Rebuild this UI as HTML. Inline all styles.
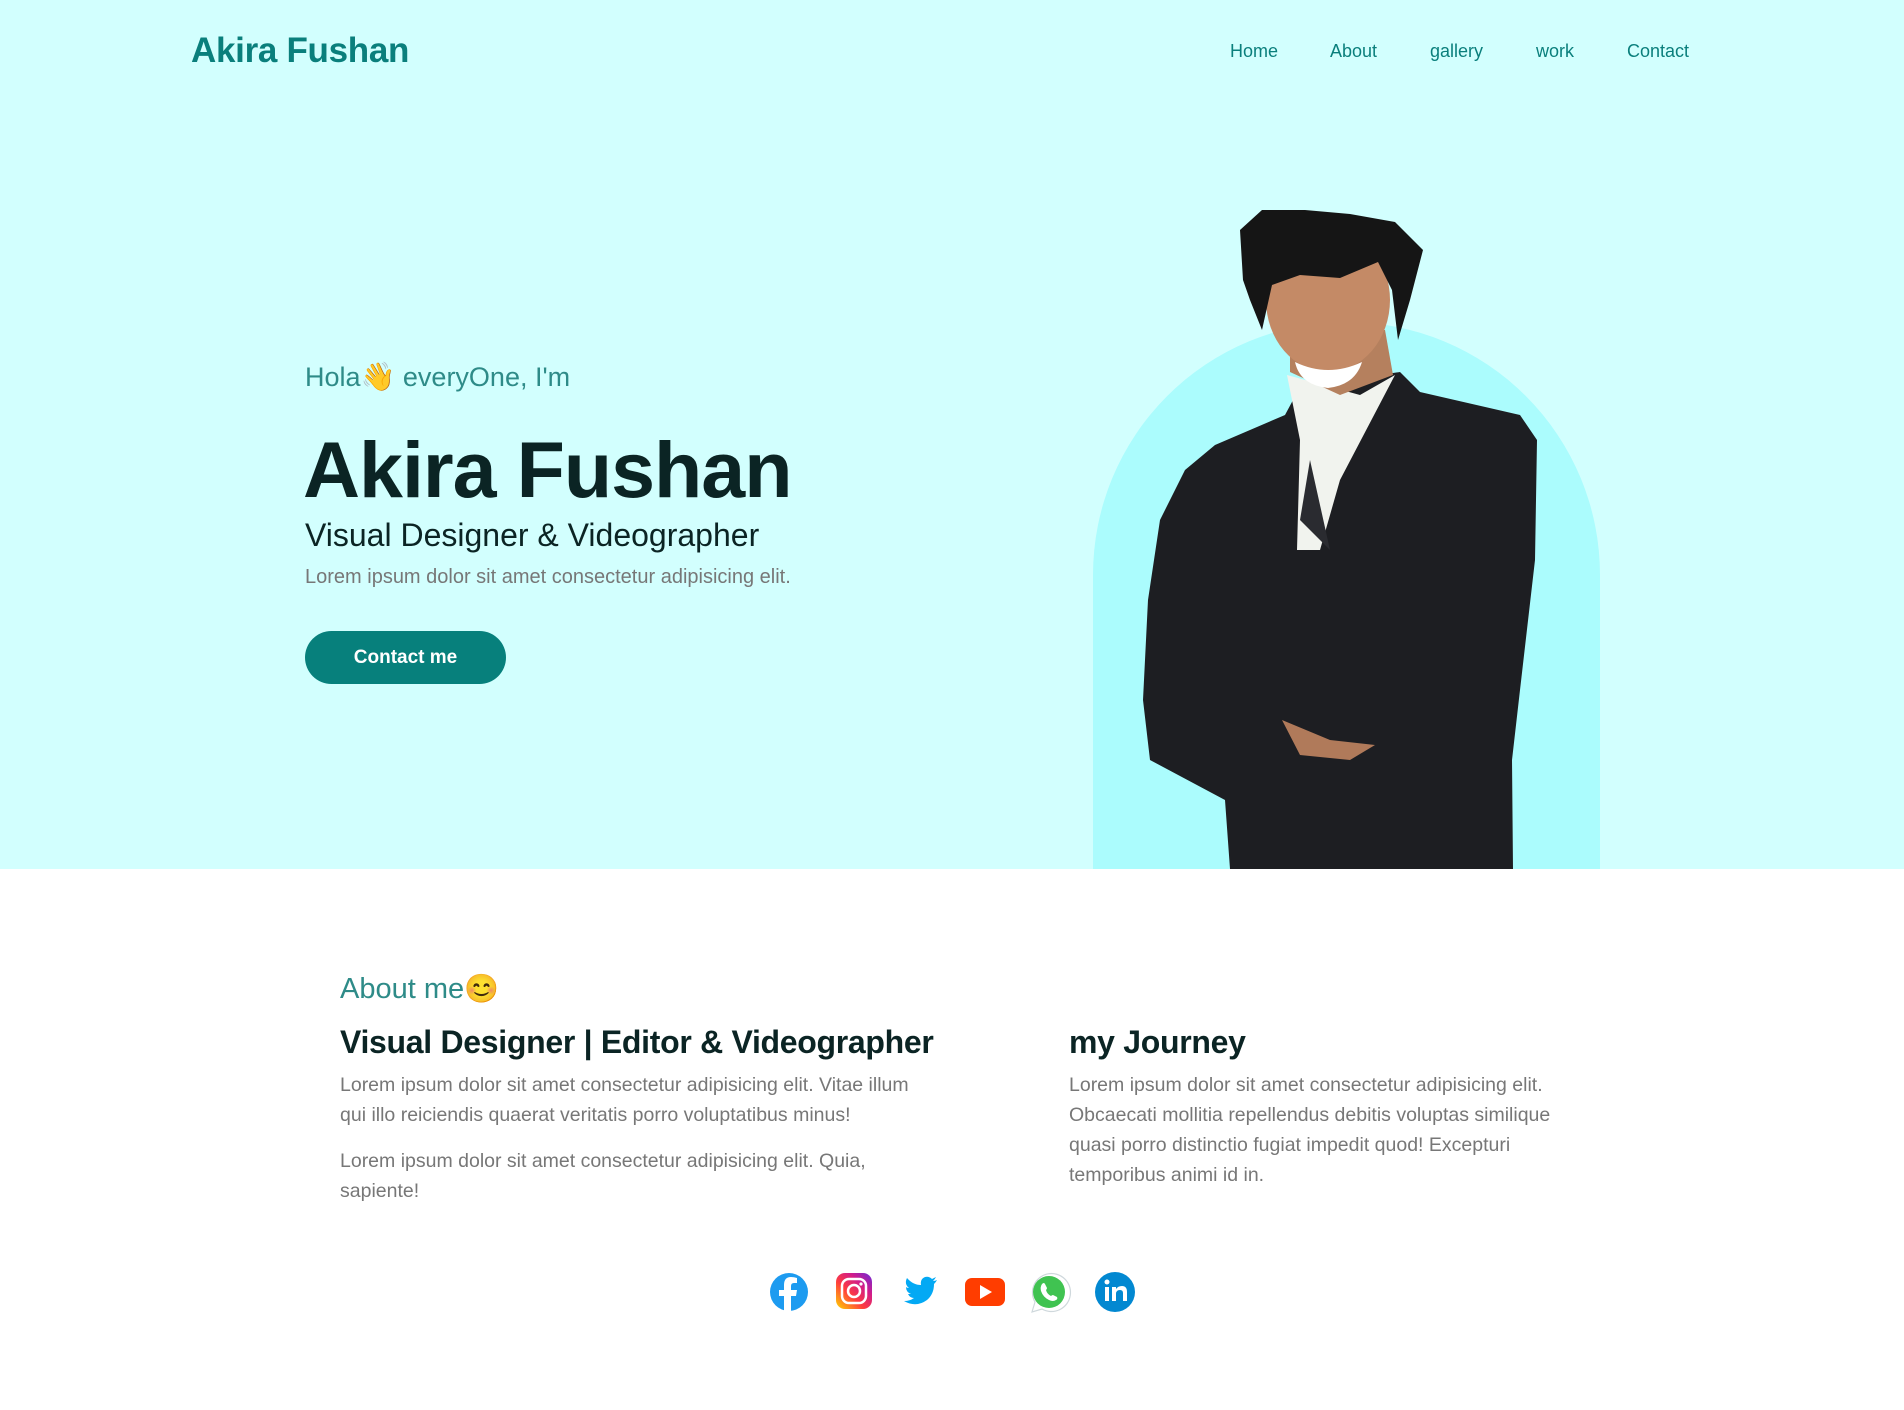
<!DOCTYPE html>
<html><head><meta charset="utf-8"><style>
*{margin:0;padding:0;box-sizing:border-box}
body{width:1904px;height:1410px;background:#fff;font-family:"Liberation Sans",sans-serif;position:relative;overflow:hidden}
.hero{position:absolute;left:0;top:0;width:1904px;height:869px;background:#d2fffe}
.abs{position:absolute;white-space:nowrap}
.logo{left:191px;top:31px;font-size:35px;font-weight:bold;color:#0a7f7c;letter-spacing:-0.3px}
.nav{top:41px;font-size:18px;color:#0a7f7c}
.arch{left:1093px;top:322px;width:507px;height:547px;background:#abfcfd;border-radius:253px 253px 0 0}
.hola{left:305px;top:360px;font-size:27px;color:#2e8b88}
.big{left:303px;top:424px;font-size:79px;font-weight:bold;color:#0b2424;letter-spacing:-1px}
.sub{left:305px;top:517px;font-size:32px;color:#0b2424}
.lor{left:305px;top:566px;font-size:20px;color:#777}
.btn{left:305px;top:631px;width:201px;height:53px;border-radius:27px;background:#07807c;color:#fff;font-size:19px;font-weight:bold;text-align:center;line-height:53px}
.am{left:340px;top:972px;font-size:29px;color:#2e8b88}
.h2{top:1024px;font-size:32px;font-weight:bold;color:#0b2424;letter-spacing:-0.3px}
.p{position:absolute;font-size:19.5px;line-height:30px;color:#777}
</style></head><body>
<div class="hero"></div>
<div class="abs logo">Akira Fushan</div>
<div class="abs nav" style="left:1230px">Home</div>
<div class="abs nav" style="left:1330px">About</div>
<div class="abs nav" style="left:1430px">gallery</div>
<div class="abs nav" style="left:1536px">work</div>
<div class="abs nav" style="left:1627px">Contact</div>
<div class="abs arch"></div>
<svg class="abs" style="left:0;top:0" width="1904" height="869" viewBox="0 0 1904 869">
<path d="M1230 869 L1225 800 L1150 760 L1143 700 L1148 600 L1160 520 L1185 470 L1215 445 L1285 415 L1300 387 L1400 372 L1420 392 L1520 415 L1537 440 L1535 560 L1520 690 L1512 760 L1513 869 Z" fill="#1d1e22"/>
<path d="M1287 375 L1300 440 L1297 550 L1320 550 L1340 480 L1395 375 L1360 395 Z" fill="#f1f3ee"/>
<path d="M1310 460 L1330 550 L1300 520 Z" fill="#2a2b30"/>
<path d="M1290 330 L1385 330 L1393 375 L1340 395 L1290 372 Z" fill="#b5805e"/>
<ellipse cx="1328" cy="300" rx="62" ry="72" fill="#c48a66"/>
<path d="M1295 362 Q1328 378 1362 362 Q1355 385 1328 388 Q1300 385 1295 362Z" fill="#fff"/>
<path d="M1282 720 L1330 740 L1375 745 L1350 760 L1300 755 Z" fill="#b07a5a"/>
<path d="M1243 280 L1240 230 L1262 210 L1305 210 L1350 214 L1395 222 L1423 250 L1410 300 L1398 340 L1392 290 L1378 262 L1340 278 L1300 275 L1272 285 L1262 330 L1250 300 Z" fill="#151515"/>
</svg>
<div class="abs hola">Hola<span style="font-size:28px">👋</span> everyOne, I'm</div>
<div class="abs big">Akira Fushan</div>
<div class="abs sub">Visual Designer &amp; Videographer</div>
<div class="abs lor">Lorem ipsum dolor sit amet consectetur adipisicing elit.</div>
<div class="abs btn">Contact me</div>

<div class="abs am">About me<span style="font-size:28px">😊</span></div>
<div class="abs h2" style="left:340px">Visual Designer | Editor &amp; Videographer</div>
<div class="p" style="left:340px;top:1070px;width:585px">Lorem ipsum dolor sit amet consectetur adipisicing elit. Vitae illum qui illo reiciendis quaerat veritatis porro voluptatibus minus!</div>
<div class="p" style="left:340px;top:1146px;width:585px">Lorem ipsum dolor sit amet consectetur adipisicing elit. Quia, sapiente!</div>
<div class="abs h2" style="left:1069px">my Journey</div>
<div class="p" style="left:1069px;top:1070px;width:510px">Lorem ipsum dolor sit amet consectetur adipisicing elit. Obcaecati mollitia repellendus debitis voluptas similique quasi porro distinctio fugiat impedit quod! Excepturi temporibus animi id in.</div>

<svg class="abs" style="left:760px;top:1266px" width="380" height="54" viewBox="0 0 380 54">
<defs><linearGradient id="ig" x1="0" y1="1" x2="1" y2="0"><stop offset="0" stop-color="#ffd600"/><stop offset=".4" stop-color="#ff3d3d"/><stop offset=".7" stop-color="#d01c8b"/><stop offset="1" stop-color="#6a2bd8"/></linearGradient></defs>
<circle cx="29" cy="26" r="19" fill="#1d9bf0"/>
<path d="M31 45 V30 h5 l1 -6 h-6 v-4 q0 -3 3 -3 h3 v-5 q-3 -1 -6 -1 q-7 0 -7 8 v5 h-5 v6 h5 v15 z" fill="#fff"/>
<rect x="76" y="7" width="36" height="36" rx="9" fill="url(#ig)"/>
<rect x="82" y="13" width="24" height="24" rx="7" fill="none" stroke="#fff" stroke-width="2.5"/>
<circle cx="94" cy="25" r="6" fill="none" stroke="#fff" stroke-width="2.5"/>
<circle cx="101" cy="18" r="1.6" fill="#fff"/>
<path d="M177 14 q-2 1 -4 1 q2 -2 3 -4 q-2 1 -4 2 q-3 -3 -7 -2 q-5 2 -4 8 q-8 0 -14 -7 q-3 6 2 10 q-2 0 -3 -1 q0 5 5 7 h-3 q2 4 6 4 q-4 3 -10 3 q12 7 23 -1 q7 -6 7 -16 q2 -2 3 -4z" fill="#03a9f4"/>
<rect x="205" y="12" width="40" height="28" rx="7" fill="#ff3d00"/>
<path d="M220 19 L232 26 L220 33 Z" fill="#fff"/>
<path d="M272 46 l3 -10 a19 19 0 1 1 7 7 z" fill="#fff" stroke="#cfd8dc" stroke-width="1.2"/>
<circle cx="289" cy="26" r="16" fill="#40c351"/>
<path d="M282 18 q2 -2 3 0 l2 4 q0 1 -1 2 q1 4 5 6 q1 -1 2 -1 l4 2 q1 2 -1 3 q-3 2 -7 0 q-6 -3 -8 -9 q-1 -4 1 -7z" fill="#fff"/>
<circle cx="355" cy="26" r="20" fill="#0288d1"/>
<rect x="345" y="21" width="4" height="14" fill="#fff"/><circle cx="347" cy="16" r="2.5" fill="#fff"/>
<path d="M352 21 h4 v2 q2 -3 6 -3 q5 0 5 6 v9 h-4 v-8 q0 -3 -3 -3 q-4 0 -4 4 v7 h-4z" fill="#fff"/>
</svg>
</body></html>
